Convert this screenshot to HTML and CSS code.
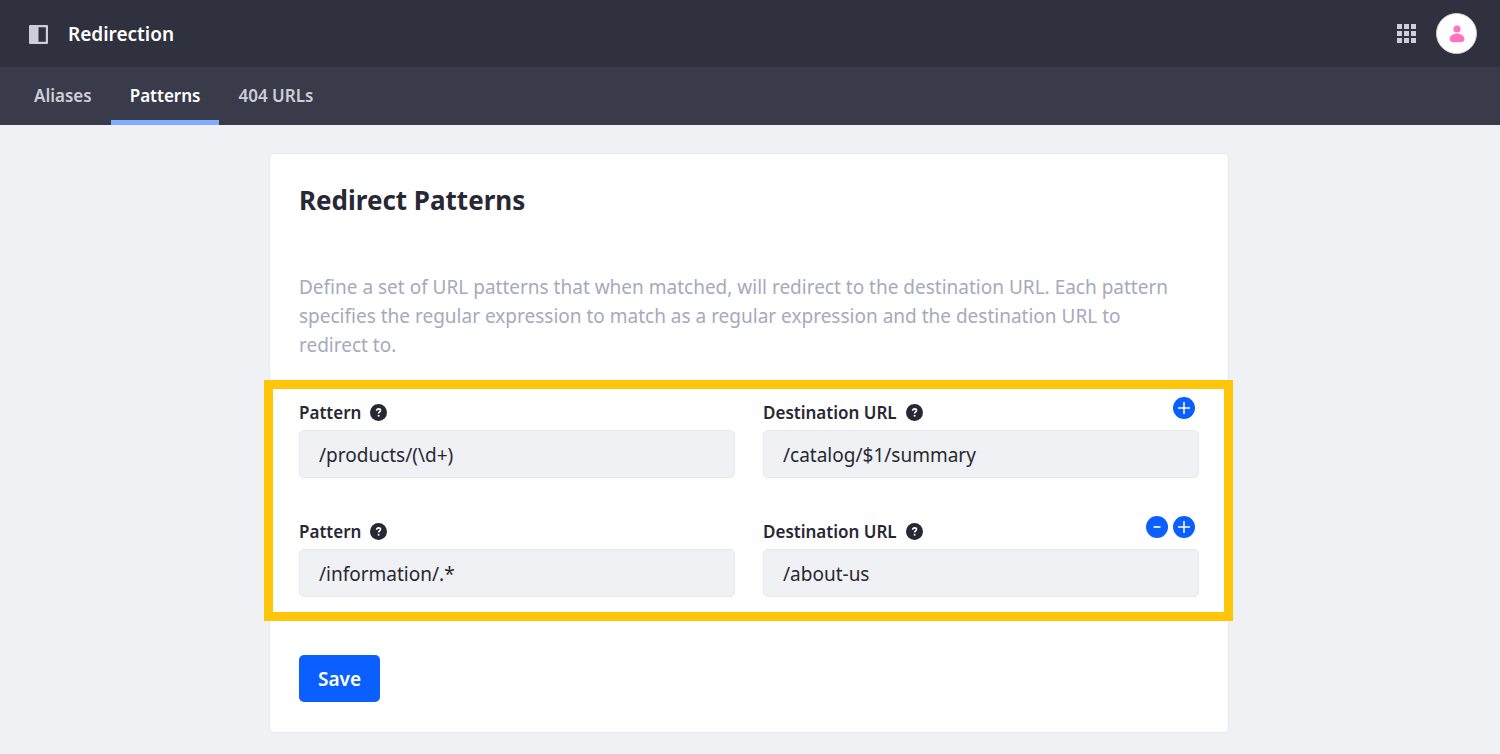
FILE: index.html
```html
<!DOCTYPE html>
<html lang="en">
<head>
<meta charset="utf-8">
<title>Redirection</title>
<link rel="stylesheet" href="styles.css">
</head>
<body>
<svg class="sprite" aria-hidden="true">
  <symbol id="help" viewBox="0 0 17 17">
    <circle cx="8.5" cy="8.5" r="8.5" fill="#272833"/>
    <path d="M6.6 6.7C6.7 5.4 7.500 4.900 8.600 4.900C9.800 4.900 10.500 5.600 10.500 6.500C10.500 7.900 8.600 7.900 8.600 9.600" fill="none" stroke="#fff" stroke-width="1.600"/>
    <circle cx="8.600" cy="11.700" r="1" fill="#fff"/>
  </symbol>
  <symbol id="plus" viewBox="0 0 22 22">
    <path d="M11 5v12M5 11h12" fill="none" stroke="#fff" stroke-width="1.500"/>
  </symbol>
  <symbol id="minus" viewBox="0 0 22 22">
    <path d="M7.500 11h7" fill="none" stroke="#fff" stroke-width="1.600"/>
  </symbol>
</svg>

<header class="topbar">
  <button class="icon-button" type="button" aria-label="Toggle product menu">
    <svg width="19" height="20" viewBox="0 -1 19 20"><path fill="#cdced9" fill-rule="evenodd" d="M1 0H18Q19 0 19 1V18Q19 19 18 19H1Q0 19 0 18V1Q0 0 1 0ZM9.500 2.200V16.800H16.800V2.200Z"/></svg>
  </button>
  <h1 class="topbar-title">Redirection</h1>
  <button class="icon-button apps" type="button" aria-label="Applications">
    <svg width="19" height="19" viewBox="0 0 19 19" fill="#cdced9"><path d="M0 0h5v5H0zM7 0h5v5H7zM14 0h5v5h-5zM0 7h5v5H0zM7 7h5v5H7zM14 7h5v5h-5zM0 14h5v5H0zM7 14h5v5H7zM14 14h5v5h-5z"/></svg>
  </button>
  <button class="avatar" type="button" aria-label="User menu">
    <svg width="16" height="18" viewBox="0 0 16 18" fill="#ff73c3"><circle cx="8" cy="4" r="3.600"/><path d="M8 8.600C12 8.600 15.400 11 15.400 14.200C15.400 16.500 13.500 17.300 8 17.300S.6 16.500 .6 14.200C.6 11 4 8.600 8 8.600Z"/></svg>
  </button>
</header>

<nav class="tabs">
  <a class="tab" href="#aliases">Aliases</a>
  <a class="tab active" href="#patterns" aria-current="page">Patterns</a>
  <a class="tab" href="#urls">404 URLs</a>
</nav>

<main class="page">
  <form class="card">
    <h2 class="card-title">Redirect Patterns</h2>
    <p class="description">Define a set of URL patterns that when matched, will redirect to the destination URL. Each pattern specifies the regular expression to match as a regular expression and the destination URL to redirect to.</p>

    <div class="patterns">
      <div class="row">
        <div class="field">
          <div class="field-head">
            <label for="pattern-1">Pattern</label>
            <svg class="help"><use href="#help"/></svg>
          </div>
          <input id="pattern-1" type="text" value="/products/(\d+)">
        </div>
        <div class="field">
          <div class="field-head">
            <label for="destination-1">Destination URL</label>
            <svg class="help"><use href="#help"/></svg>
            <div class="actions">
              <button class="round" type="button" aria-label="Add"><svg><use href="#plus"/></svg></button>
            </div>
          </div>
          <input id="destination-1" type="text" value="/catalog/$1/summary">
        </div>
      </div>
      <div class="row">
        <div class="field">
          <div class="field-head">
            <label for="pattern-2">Pattern</label>
            <svg class="help"><use href="#help"/></svg>
          </div>
          <input id="pattern-2" type="text" value="/information/.*">
        </div>
        <div class="field">
          <div class="field-head">
            <label for="destination-2">Destination URL</label>
            <svg class="help"><use href="#help"/></svg>
            <div class="actions">
              <button class="round" type="button" aria-label="Remove"><svg><use href="#minus"/></svg></button>
              <button class="round" type="button" aria-label="Add"><svg><use href="#plus"/></svg></button>
            </div>
          </div>
          <input id="destination-2" type="text" value="/about-us">
        </div>
      </div>
    </div>

    <button class="save" type="submit">Save</button>
  </form>
</main>
</body>
</html>
```

FILE: styles.css
```css
* {
  box-sizing: border-box;
}

body {
  margin: 0;
  background: #f0f1f5;
  color: #272833;
  font-family: "Noto Sans", "Open Sans", sans-serif;
  font-size: 19px;
}

button {
  border: 0;
  padding: 0;
  font-family: inherit;
  cursor: pointer;
}

svg {
  display: block;
}

.sprite {
  display: none;
}

.topbar {
  display: flex;
  align-items: center;
  height: 67px;
  padding: 0 23px 0 29px;
  background: #30313f;
}

.icon-button {
  background: none;
}

.topbar-title {
  margin: 0 auto 0 20px;
  color: #fff;
  font-size: 19px;
  font-weight: 600;
}

.apps {
  margin-right: 20px;
}

.avatar {
  display: grid;
  place-items: center;
  width: 41px;
  height: 41px;
  border: 1px solid #cdced9;
  border-radius: 50%;
  background: #fff;
}

.tabs {
  display: flex;
  height: 58px;
  padding-left: 15px;
  background: #393a4a;
}

.tab {
  padding: 0 19px;
  border-bottom: 5px solid transparent;
  color: #cdced9;
  font-size: 17px;
  font-weight: 600;
  line-height: 58px;
  text-decoration: none;
}

.tab.active {
  border-color: #80acff;
  color: #fff;
}

.page {
  padding: 28px 30px 21px 28px;
}

.card {
  max-width: 960px;
  margin: 0 auto;
  padding: 26px 29px 30px;
  border: 1px solid #e7e7ed;
  border-radius: 5px;
  background: #fff;
}

.card-title {
  margin: 0 0 53px;
  font-size: 26px;
  font-weight: 700;
  line-height: 40px;
}

.description {
  margin: 0 0 41px;
  padding-right: 20px;
  color: #a7a9bc;
  line-height: 29px;
}

.patterns {
  position: relative;
  display: grid;
  gap: 42px;
  margin-bottom: 58px;
}

.patterns::after {
  content: "";
  position: absolute;
  inset: -21px -34px -24px -35px;
  border: 9px solid #ffc508;
  pointer-events: none;
}

.row {
  display: grid;
  grid-template-columns: 1fr 1fr;
  gap: 28px;
}

.field-head {
  display: flex;
  align-items: center;
  height: 22px;
  margin-bottom: 7px;
}

.field-head label {
  font-size: 17px;
  font-weight: 600;
}

.help {
  width: 17px;
  height: 17px;
  margin-left: 9px;
}

.actions {
  display: flex;
  align-self: flex-start;
  gap: 5px;
  margin: -4px 4px 0 auto;
}

.round {
  width: 22px;
  height: 22px;
  border-radius: 50%;
  background: #0b5fff;
}

.round svg {
  width: 22px;
  height: 22px;
}

.field input {
  display: block;
  width: 100%;
  height: 48px;
  padding: 2px 19px 0;
  border: 1px solid #e7e7ed;
  border-radius: 5px;
  background: #f0f1f5;
  color: #272833;
  font-family: inherit;
  font-size: 19px;
}

.save {
  display: block;
  height: 47px;
  padding: 0 19px;
  border-radius: 5px;
  background: #0b5fff;
  color: #fff;
  font-size: 19px;
  font-weight: 600;
}
```
